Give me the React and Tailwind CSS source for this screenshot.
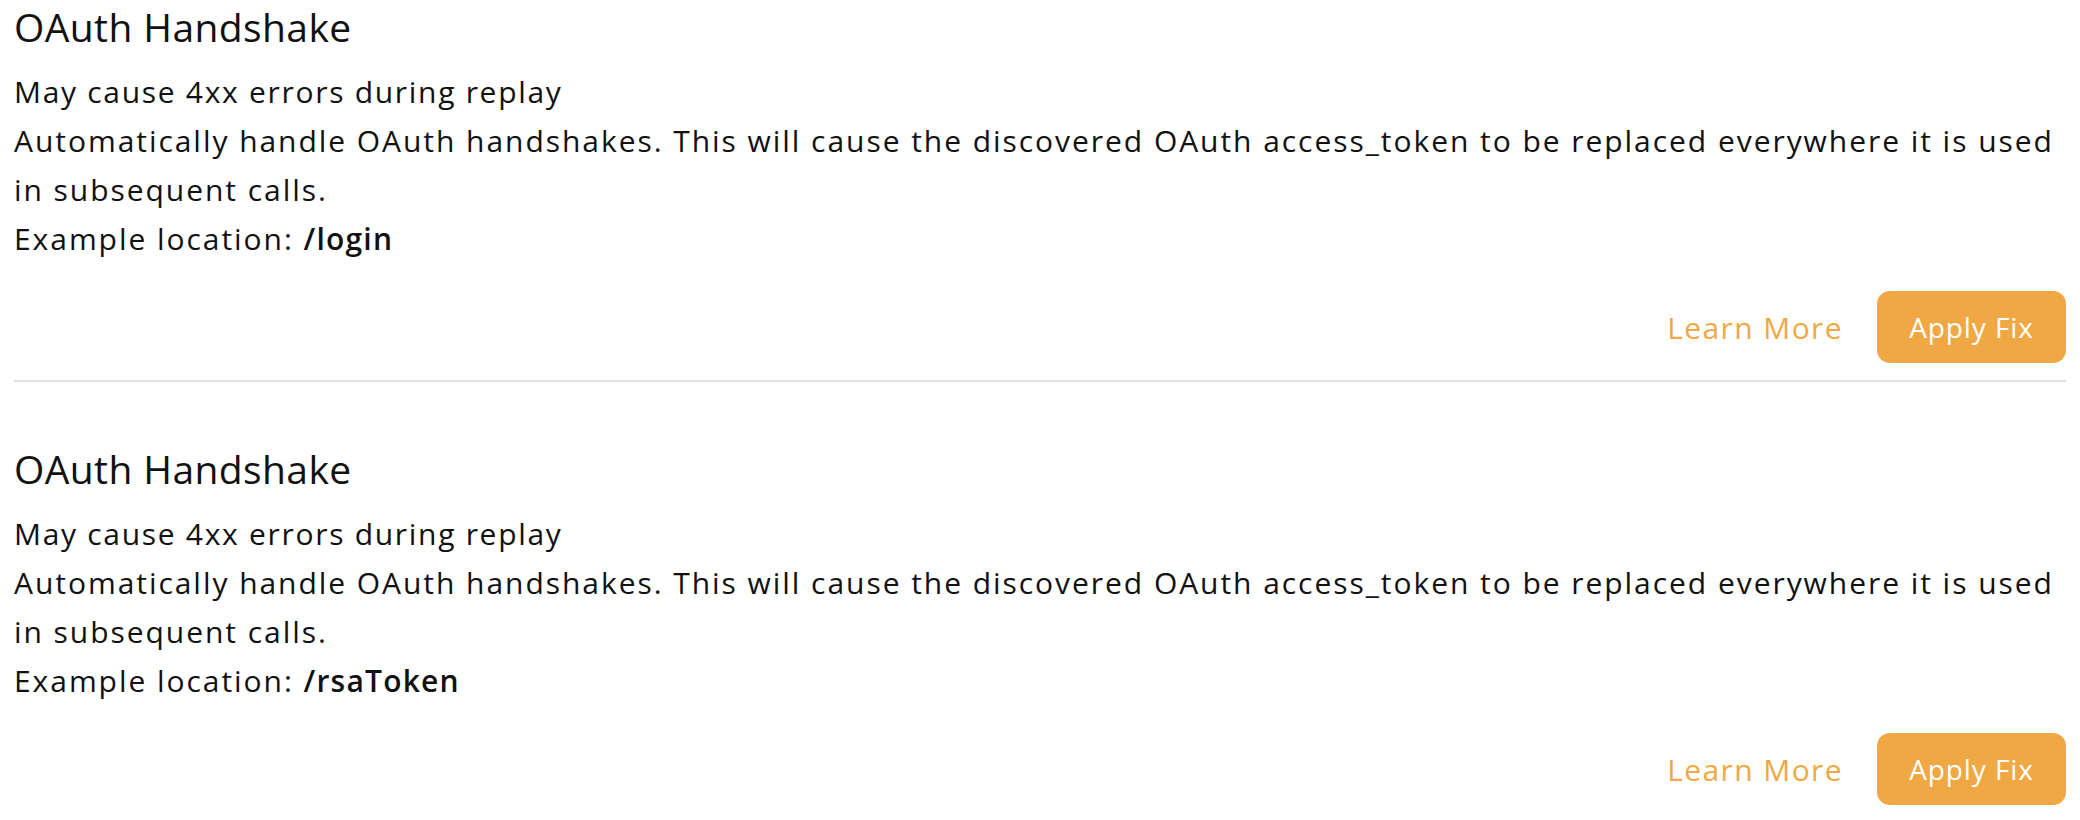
export default function App() {
  const items = [
    { path: "/login" },
    { path: "/rsaToken" },
  ];
  return (
    <div className="w-[2080px] h-[820px] bg-white px-[14px] text-[#111111]" style={{ fontFamily: '"Open Sans", sans-serif' }}>
      {items.map((it, i) => (
        <div key={i} className={i === 0 ? "" : "mt-[60px]"}>
          <h2 className="text-[39px] leading-[54px] font-medium tracking-[0.4px]">OAuth Handshake</h2>
          <p className="mt-[13px] text-[30px] leading-[49px] font-medium tracking-[1.7px]">May cause 4xx errors during replay</p>
          <p className="text-[30px] leading-[49px] tracking-[1.95px]">
            Automatically handle OAuth handshakes. This will cause the discovered OAuth access_token to be replaced everywhere it is used in subsequent calls.
          </p>
          <p className="text-[30px] leading-[49px] tracking-[1.95px]">
            Example location: <span className="font-semibold tracking-[1.2px]">{it.path}</span>
          </p>
          <div className="mt-[28px] flex items-center justify-end gap-[34px]">
            <button className="text-[30px] tracking-[1.4px] text-[#efa843]">Learn More</button>
            <button className="h-[72px] w-[189px] rounded-[13px] bg-[#efa843] text-[28px] font-medium tracking-[0.9px] text-white">Apply Fix</button>
          </div>
          {i === 0 && <div className="mt-[17px] h-[2px] bg-[#e0e0e0]" />}
        </div>
      ))}
    </div>
  );
}
